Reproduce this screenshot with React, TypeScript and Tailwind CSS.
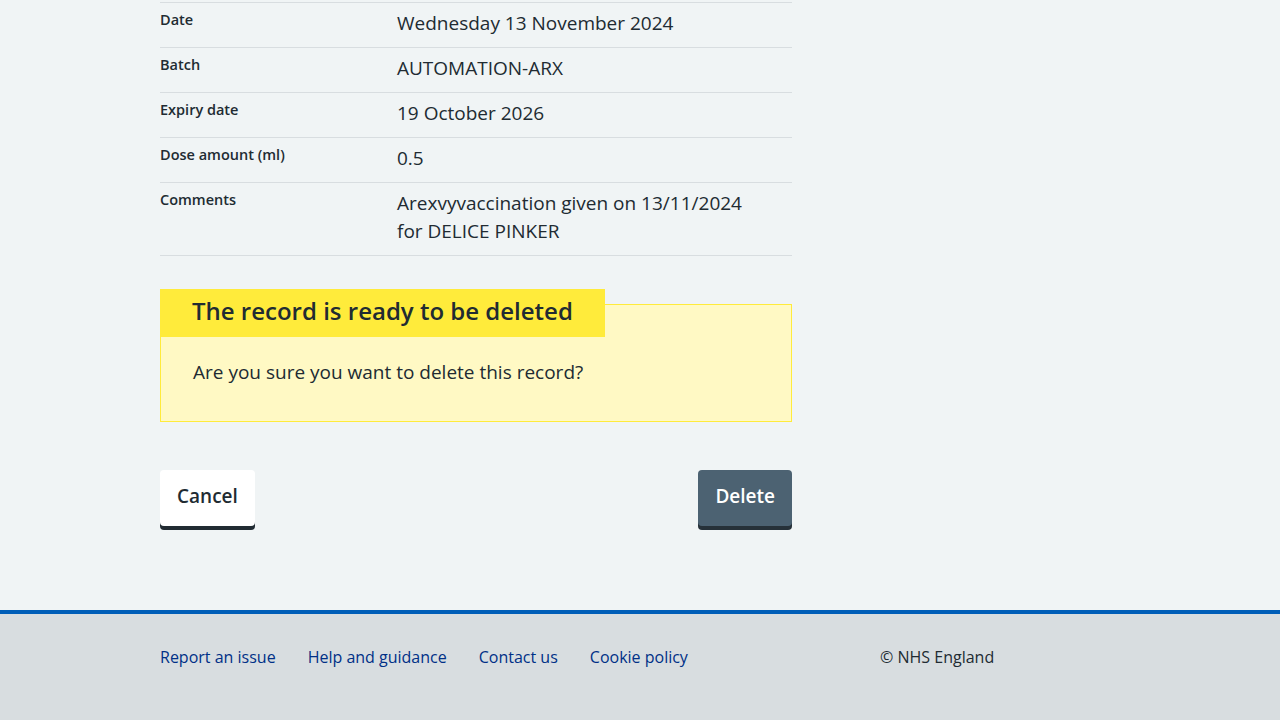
import React from "react";

const rows: { k: string; v: React.ReactNode }[] = [
  { k: "Date", v: "Wednesday 13 November 2024" },
  { k: "Batch", v: "AUTOMATION-ARX" },
  { k: "Expiry date", v: "19 October 2026" },
  { k: "Dose amount (ml)", v: "0.5" },
  {
    k: "Comments",
    v: (
      <>
        Arexvyvaccination given on 13/11/2024
        <br />
        for DELICE PINKER
      </>
    ),
  },
];

export default function App() {
  return (
    <div
      className="min-h-[720px] flex flex-col bg-[#f0f4f5] text-[#212b32]"
      style={{ fontFamily: "'Open Sans', 'Noto Sans', sans-serif" }}
    >
      <main className="flex-1 pt-[2px] pb-[80px]">
        <div className="w-[960px] mx-auto">
          <div className="w-[632px]">
            <dl className="border-t border-[#d8dde0]">
              {rows.map((r) => (
                <div key={r.k} className="flex border-b border-[#d8dde0]">
                  <dt className="w-[237px] shrink-0 pt-[7px] pb-[8px] text-[14.5px] leading-[20px] font-semibold">
                    {r.k}
                  </dt>
                  <dd className="flex-1 pt-[6px] pb-[10px] text-[19px] leading-[28px]">{r.v}</dd>
                </div>
              ))}
            </dl>

            <div className="mt-[48px] border border-[#ffeb3b] bg-[#fff9c4] px-[32px] pb-[35px]">
              <h2 className="block w-fit -mt-[16px] -ml-[33px] bg-[#ffeb3b] px-[32px] pt-[6px] pb-[10px] text-[24px] leading-[32px] font-semibold">
                The record is ready to be deleted
              </h2>
              <p className="mt-[21px] text-[19px] leading-[28px]">
                Are you sure you want to delete this record?
              </p>
            </div>

            <div className="mt-[48px] flex justify-between">
              <button className="bg-white rounded-[4px] px-[15px] pt-[10px] pb-[14px] border-2 border-transparent text-[19px] leading-[28px] font-semibold text-[#212b32] shadow-[0_4px_0_#212b32]">
                Cancel
              </button>
              <button className="bg-[#4c6272] rounded-[4px] px-[15px] pt-[10px] pb-[14px] border-2 border-transparent text-[19px] leading-[28px] font-semibold text-white shadow-[0_4px_0_#263139]">
                Delete
              </button>
            </div>
          </div>
        </div>
      </main>

      <footer className="border-t-4 border-[#005eb8] bg-[#d8dde0] h-[110px]">
        <div className="w-[960px] mx-auto pt-[31px] flex text-[16px] leading-[24px]">
          <ul className="w-[720px] flex gap-[32px] text-[#003087]">
            <li><a href="#">Report an issue</a></li>
            <li><a href="#">Help and guidance</a></li>
            <li><a href="#">Contact us</a></li>
            <li><a href="#">Cookie policy</a></li>
          </ul>
          <p className="text-[#212b32]">© NHS England</p>
        </div>
      </footer>
    </div>
  );
}
